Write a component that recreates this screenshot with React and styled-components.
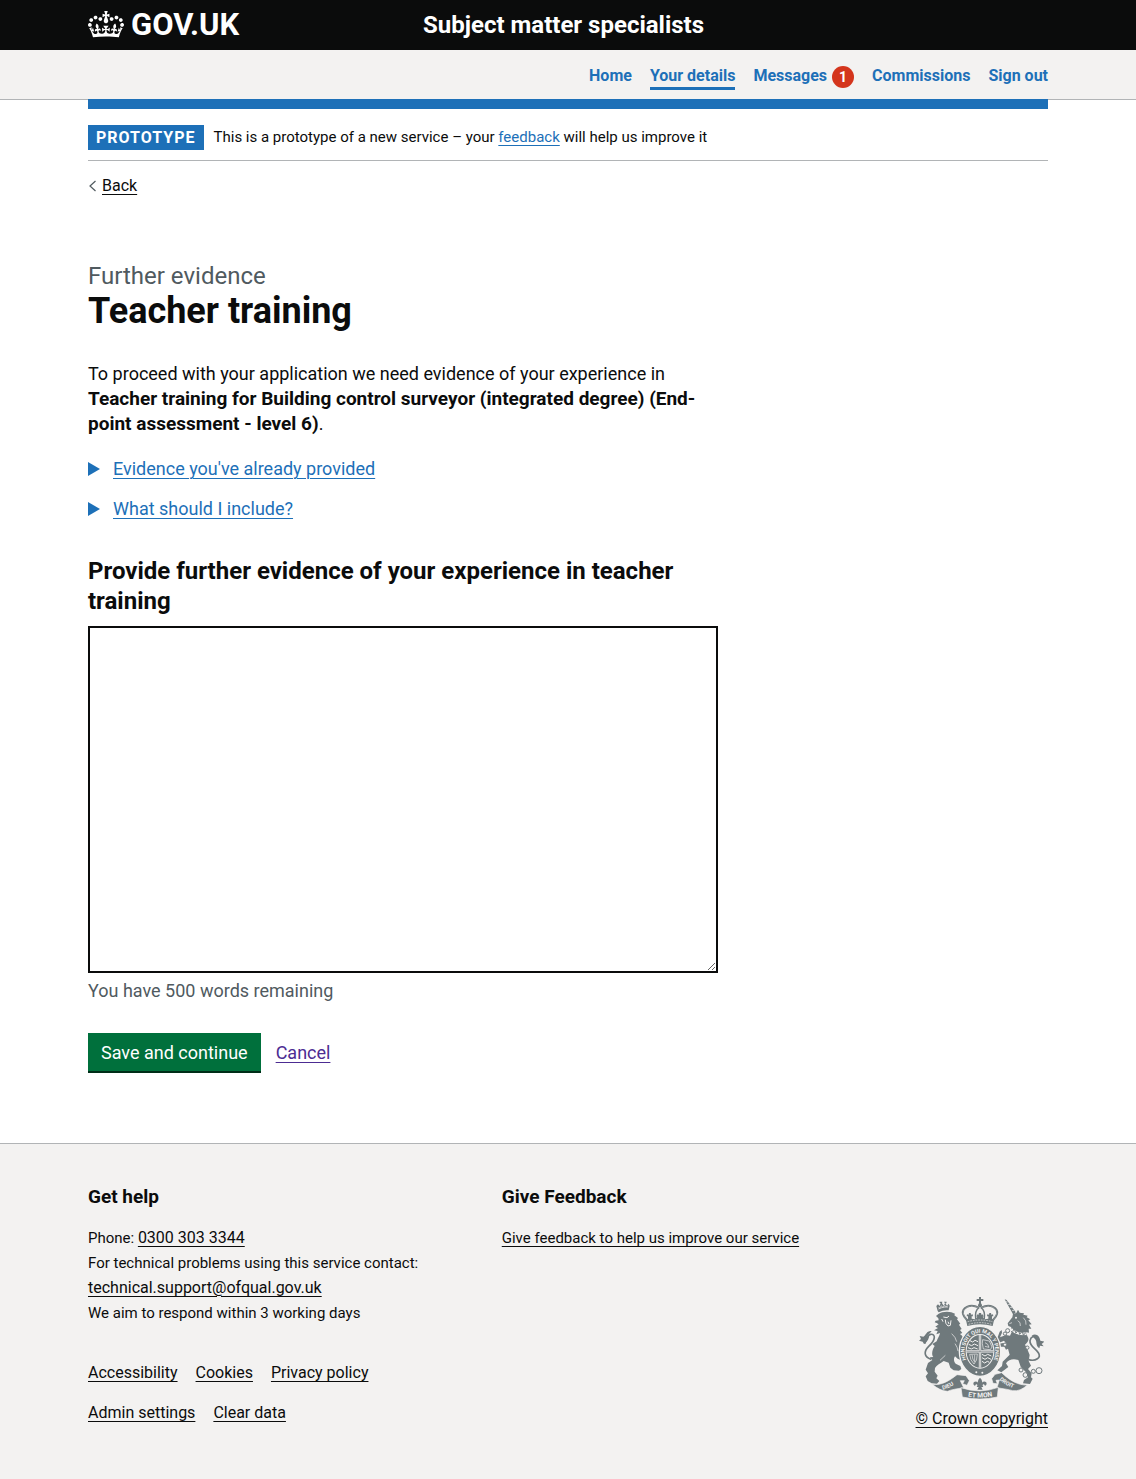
import React, { useState } from 'react';
import styled, { createGlobalStyle } from 'styled-components';

const colour = {
  ink: '#0b0c0c',
  muted: '#505a5f',
  link: '#1d70b8',
  visited: '#4c2c92',
  border: '#b1b4b6',
  panel: '#f3f2f1',
  crest: '#6f797c',
  red: '#d4351c',
  green: '#00703c',
};

const GlobalStyle = createGlobalStyle`
  *, *::before, *::after { box-sizing: border-box; }
  html { background: ${colour.panel}; }
  body {
    margin: 0;
    background: #ffffff;
    color: ${colour.ink};
    font-family: Roboto, "Liberation Sans", sans-serif;
    font-size: 18px;
    line-height: 25px;
  }
`;

const Container = styled.div`
  width: min(960px, 100% - 60px);
  margin: 0 auto;
`;

const Link = styled.a`
  color: ${({ $tone }) => colour[$tone || 'link']};
  text-decoration: underline;
  text-decoration-thickness: 1px;
  text-underline-offset: 3px;
`;

const FooterLink = styled(Link).attrs({ $tone: 'ink' })`
  font-size: 16px;
  line-height: 20px;
`;

const Header = styled.header`
  background: ${colour.ink};
  color: #ffffff;
`;

const HeaderRow = styled(Container)`
  display: flex;
  align-items: center;
  height: 50px;
`;

const LogoCell = styled.div`
  flex: 0 0 calc(100% / 3 + 15px);
`;

const LogoLink = styled.a`
  display: inline-flex;
  align-items: center;
  gap: 7px;
  color: #ffffff;
  font-size: 31px;
  font-weight: 700;
  line-height: 50px;
  text-decoration: none;
`;

const ServiceLink = styled.a`
  color: #ffffff;
  font-size: 24px;
  font-weight: 700;
  line-height: 50px;
  text-decoration: none;
`;

const NavBar = styled.nav`
  background: ${colour.panel};
  border-bottom: 1px solid ${colour.border};
`;

const NavList = styled.ul`
  display: flex;
  flex-wrap: wrap;
  justify-content: flex-end;
  gap: 0 18px;
  margin: 0;
  padding: 16px 0 9px;
  list-style: none;
`;

const NavLink = styled.a`
  display: flex;
  height: 24px;
  border-bottom: 3px solid ${({ $current }) => ($current ? colour.link : 'transparent')};
  color: ${colour.link};
  font-size: 16px;
  font-weight: 700;
  line-height: 20px;
  text-decoration: none;
`;

const Badge = styled.span`
  width: 22px;
  height: 22px;
  margin-left: 5px;
  border-radius: 50%;
  background: ${colour.red};
  color: #ffffff;
  font-size: 14px;
  line-height: 22px;
  text-align: center;
`;

const Page = styled(Container)`
  margin-top: -1px;
  border-top: 10px solid ${colour.link};
`;

const PhaseBanner = styled.div`
  display: flex;
  gap: 10px;
  padding: 16px 0 10px;
  border-bottom: 1px solid ${colour.border};
  font-size: 15px;
`;

const PhaseTag = styled.strong`
  padding: 0 8px;
  background: ${colour.link};
  color: #ffffff;
  font-size: 16px;
  letter-spacing: 1px;
  text-transform: uppercase;
`;

const BackLink = styled.a`
  display: inline-flex;
  align-items: center;
  gap: 5px;
  margin: 15px 0;
  color: ${colour.ink};
  font-size: 16px;
  line-height: 20px;
  text-decoration: underline;
  text-decoration-thickness: 1px;
  text-underline-offset: 3px;
`;

const BackRow = styled.div`
  display: flex;
`;

const Main = styled.main`
  max-width: 630px;
  padding: 50px 0 72px;
`;

const Title = styled.h1`
  margin: 0 0 30px;
  font-size: 36px;
  line-height: 40px;
`;

const Caption = styled.span`
  display: block;
  color: ${colour.muted};
  font-size: 24px;
  font-weight: 400;
  line-height: 30px;
`;

const Lead = styled.p`
  margin: 0 0 20px;

  strong { font-size: 19px; }
`;

const Details = styled.details`
  margin-bottom: 15px;
`;

const Summary = styled.summary`
  display: flex;
  align-items: center;
  gap: 13px;
  width: fit-content;
  color: ${colour.link};
  cursor: pointer;
  list-style: none;
  text-decoration: underline;
  text-decoration-thickness: 1px;
  text-underline-offset: 3px;

  &::-webkit-details-marker { display: none; }

  &::before {
    content: "";
    border: solid transparent;
    border-width: 7px 0 7px 12px;
    border-left-color: ${colour.link};
  }

  details[open] > &::before {
    border-width: 12px 7px 0 7px;
    border-color: ${colour.link} transparent transparent;
  }
`;

const Form = styled.form`
  margin-top: 35px;
`;

const FieldLabel = styled.label`
  display: block;
  margin-bottom: 10px;
  font-size: 24px;
  font-weight: 700;
  line-height: 30px;
`;

const TextArea = styled.textarea`
  display: block;
  width: 100%;
  height: 347px;
  padding: 5px;
  border: 2px solid ${colour.ink};
  border-radius: 0;
  background: #ffffff;
  color: ${colour.ink};
  font: inherit;
  resize: vertical;
`;

const Hint = styled.div`
  margin: 5px 0 30px;
  color: ${colour.muted};
`;

const Actions = styled.div`
  display: flex;
  align-items: center;
  gap: 15px;
`;

const Button = styled.button`
  height: 38px;
  padding: 0 13px;
  border: 0;
  background: ${colour.green};
  box-shadow: 0 2px 0 #002d18;
  color: #ffffff;
  font: inherit;
  cursor: pointer;
`;

const Footer = styled.footer`
  padding: 40px 0 48px;
  border-top: 1px solid ${colour.border};
  background: ${colour.panel};
  font-size: 15px;
`;

const FooterRow = styled(Container)`
  display: flex;
  flex-wrap: wrap;
  align-items: flex-end;
`;

const FooterMain = styled.div`
  flex: 1;
`;

const FooterColumns = styled.div`
  display: grid;
  grid-template-columns: 1fr 1fr;
`;

const FooterHeading = styled.h2`
  margin: 0 0 17px;
  font-size: 19px;
  line-height: 25px;
`;

const FooterText = styled.p`
  margin: 0;
`;

const FooterLinks = styled.div`
  display: grid;
  gap: 15px;
  padding: 35px 0 5px;
`;

const LinkList = styled.ul`
  display: flex;
  flex-wrap: wrap;
  gap: 0 18px;
  margin: 0;
  padding: 0;
  list-style: none;
`;

const Copyright = styled.a`
  display: grid;
  justify-items: center;
  gap: 7px;
  color: ${colour.ink};
  font-size: 16px;
  text-decoration: underline;
  text-decoration-thickness: 1px;
  text-underline-offset: 3px;
`;

const crownPath =
  'M25 30.2c3.5 1.5 7.7-.2 9.1-3.7 1.5-3.6-.2-7.8-3.9-9.2-3.6-1.4-7.6.3-9.1 3.9-1.4 3.5.3 7.5 3.9 9zM9 39.5c3.6 1.5 7.8-.2 9.2-3.7 1.5-3.6-.2-7.8-3.9-9.1-3.6-1.5-7.6.2-9.1 3.8-1.4 3.5.3 7.5 3.8 9zM4.4 57.2c3.5 1.5 7.7-.2 9.1-3.8 1.5-3.6-.2-7.7-3.9-9.1-3.5-1.5-7.6.3-9.1 3.8-1.4 3.5.3 7.6 3.9 9.1zm38.3-21.4c3.5 1.5 7.7-.2 9.1-3.8 1.5-3.6-.2-7.7-3.9-9.1-3.6-1.5-7.6.3-9.1 3.8-1.3 3.6.4 7.7 3.9 9.1zm64.4-5.6c-3.6 1.5-7.8-.2-9.1-3.7-1.5-3.6.2-7.8 3.8-9.2 3.6-1.4 7.7.3 9.2 3.9 1.3 3.5-.4 7.5-3.9 9zm15.9 9.3c-3.6 1.5-7.7-.2-9.1-3.7-1.5-3.6.2-7.8 3.7-9.1 3.6-1.5 7.7.2 9.2 3.8 1.5 3.5-.3 7.5-3.8 9zm4.7 17.7c-3.6 1.5-7.8-.2-9.2-3.8-1.5-3.6.2-7.7 3.9-9.1 3.6-1.5 7.7.3 9.2 3.8 1.3 3.5-.4 7.6-3.9 9.1zM89.3 35.8c-3.6 1.5-7.8-.2-9.2-3.8-1.4-3.6.2-7.7 3.9-9.1 3.6-1.5 7.7.3 9.2 3.8 1.4 3.6-.3 7.7-3.9 9.1zM69.7 17.7l8.9 4.7V9.3l-8.9 2.8c-.2-.3-.5-.6-.9-.9L72.4 0H59.6l3.5 11.2c-.3.3-.6.5-.9.9l-8.8-2.8v13.1l8.8-4.7c.3.3.6.7.9.9l-5 15.4v.1c-.2.8-.4 1.6-.4 2.4 0 4.1 3.1 7.5 7 8.1h.2c.3 0 .7.1 1 .1.4 0 .7 0 1-.1h.2c4-.6 7.1-4.1 7.1-8.1 0-.8-.1-1.7-.4-2.4V34l-5.1-15.4c.4-.2.7-.6 1-.9zM66 92.8c16.9 0 32.8 1.1 47.1 3.2 4-16.9 8.9-26.7 14-33.5l-9.6-3.4c1 4.9 1.1 7.2 0 10.2-1.5-1.4-3-4.3-4.2-8.7L108.6 76c2.8-2 5-3.2 7.5-3.3-4.4 9.4-10 11.9-13.6 11.2-4.3-.8-6.3-4.6-5.6-7.9 1-4.7 5.7-5.9 8-.5 4.3-8.7-3-11.4-7.6-8.8 7.1-7.2 7.9-13.5 2.1-21.1-8 6.1-8.1 12.3-4.5 20.8-4.7-5.4-12.1-2.5-9.5 6.2 3.4-5.2 7.9-2 7.2 3.1-.6 4.3-6.4 7.8-13.5 7.2-10.3-.9-10.9-8-11.2-13.8 2.5-.5 7.1 1.8 11 7.3L80.2 60c-4.1 4.4-8 5.3-12.3 5.4 1.4-4.4 8-11.6 8-11.6H55.5s6.4 7.2 7.9 11.6c-4.2-.1-8-1-12.3-5.4l1.4 16.4c3.9-5.5 8.5-7.7 10.9-7.3-.3 5.8-.9 12.8-11.1 13.8-7.2.6-12.9-2.9-13.5-7.2-.7-5 3.8-8.3 7.1-3.1 2.7-8.7-4.6-11.6-9.4-6.2 3.7-8.5 3.6-14.7-4.6-20.8-5.8 7.6-5 13.9 2.2 21.1-4.7-2.6-11.9.1-7.7 8.8 2.3-5.5 7.1-4.2 8.1.5.7 3.3-1.3 7.1-5.7 7.9-3.5.7-9-1.8-13.5-11.2 2.5.1 4.7 1.3 7.5 3.3l-4.7-15.4c-1.2 4.4-2.7 7.2-4.3 8.7-1.1-3-.9-5.3 0-10.2l-9.5 3.4c5 6.9 9.9 16.7 14 33.5 14.8-2.1 30.8-3.2 47.7-3.2z';

function Crown() {
  return (
    <svg width="36" height="28" viewBox="0 0 132 102" fill="currentColor" aria-hidden="true">
      <path d={crownPath} />
    </svg>
  );
}

function BackArrow() {
  return (
    <svg width="9" height="12" viewBox="0 0 9 12" fill="none" stroke={colour.muted} strokeWidth="1.2" aria-hidden="true">
      <path d="M7.5 1 2 6l5.5 5" />
    </svg>
  );
}

function RoyalArms() {
  const motto = {
    fill: colour.panel,
    fontFamily: 'Roboto, sans-serif',
    fontWeight: 700,
    fontSize: 17,
  };
  return (
    <svg width="125" height="102" viewBox="60 50 375 306" fill={colour.crest} aria-hidden="true">
      <defs>
        <path id="garter" d="M210 252A46 56 0 1 1 276 252" />
        <path id="scroll-left" d="M131 328C148 325 164 315 180 302" />
        <path id="scroll-right" d="M301 298C316 312 334 323 360 328" />
        <path id="scroll-base" d="M198 347Q243 357 290 346" />
      </defs>

      {/* crowned lion */}
      <path d="M116 92l-4-15 5-5 5 5 3-9h-3v-4h8l-1 5 5 7 4-7-3-5h8l-1 5h-3l5 7 5-6 3 6-3 14q-15-2-30 6z" />
      <path d="M118 86q14-8 29-6M119 80l3 4 5-8 5 6 5-7 5 5 4-4" fill="none" stroke={colour.panel} strokeWidth="2" />
      <path d="M118 101C128 94 146 92 157 96L168 100 166 105 177 113 174 117 184 130 180 133 188 146 183 149 190 158 183 161C191 167 196 174 195 184L187 186C192 192 195 199 191 207L184 209 187 216 180 222 189 228 183 238 176 235 168 228C163 235 164 244 170 250L184 257 187 266 180 271 164 270 154 262 149 247 134 242C124 249 113 254 108 263L107 274 116 286 112 294 121 302 114 310 98 309 86 302 80 288 87 279 80 268 87 248 100 239 92 231 103 230C96 222 101 206 107 197L100 191 113 183C116 173 122 167 123 158L112 162 116 152 105 150 117 143 109 139 119 132 113 128 107 126 110 121 119 120 118 114 111 107z" />
      <path d="M133 110l11 2 6-5M139 118q-1 12 8 19l7-2 2-15M147 124l3 7M128 116l4 8" fill="none" stroke={colour.panel} strokeWidth="3" />
      <path d="M158 160q12 10 15 24M168 190q8 11 9 22M139 225l-16 15" fill="none" stroke={colour.panel} strokeWidth="2" />
      <path d="M97 237C74 230 74 213 89 198 111 178 110 160 95 162 85 164 82 177 77 190" fill="none" stroke={colour.crest} strokeWidth="5" />
      <path d="M98 152C82 150 83 163 73 169L62 167 66 176 60 181 71 184 75 191C82 187 90 178 90 167L83 170z" />

      {/* chained unicorn */}
      <path d="M317 57l6 2 27 37-7 7z" />
      <path d="M321 64l5 1M327 72l6 1M333 81l6 1M339 90l6 1" stroke={colour.panel} strokeWidth="2" />
      <path d="M342 101L352 98 357 88 362 97 375 99 373 103 386 106 383 111 394 117 388 120 398 132 390 133 397 145 389 145 390 157 380 155 386 169C391 177 388 185 378 193L385 207 392 224 389 242 396 256 387 266 398 279 396 291 401 295 393 311 372 309 375 299 387 291 381 276 365 259 358 239C343 234 329 237 321 249L328 260 307 276 295 270 309 257 311 244 332 223 327 205 321 208 316 199 302 199 300 190 313 188 323 192 315 181 301 187 290 179 297 168 302 154 308 149 309 157 303 171 321 164 333 166 340 151 336 140 328 137 326 129 340 111z" />
      <circle cx="351" cy="112" r="3" fill={colour.panel} />
      <path d="M331 130l8-3M356 121q10 4 8 16M373 112q10 9 8 21" fill="none" stroke={colour.panel} strokeWidth="2" />
      <path d="M337 148Q356 164 382 160" fill="none" stroke={colour.panel} strokeWidth="9" />
      <path d="M336 153Q356 169 382 166M341 154l4-9 6 13 7-10 4 14 8-10 3 13 8-9" fill="none" stroke={colour.crest} strokeWidth="3" />
      <g fill={colour.panel} stroke={colour.crest} strokeWidth="3">
        <circle cx="326" cy="151" r="6" />
        <circle cx="318" cy="160" r="5" />
        <circle cx="318" cy="193" r="5" />
        <circle cx="385" cy="202" r="5" />
        <circle cx="366" cy="269" r="6" />
        <circle cx="379" cy="284" r="7" />
        <circle cx="403" cy="273" r="6" />
        <circle cx="420" cy="271" r="9" />
      </g>
      <path d="M389 238C410 244 428 232 418 217 409 204 391 197 393 181 395 168 409 163 414 172" fill="none" stroke={colour.crest} strokeWidth="5" />
      <path d="M398 166C412 157 422 168 424 181L436 184 428 191 434 198 423 196 421 204C409 197 415 183 408 176z" />

      {/* crown above the shield */}
      <path d="M240 50h6v6h7v6h-7v9h-6v-9h-7v-6h7z" />
      <circle cx="243" cy="75" r="6" />
      <g fill="none" stroke={colour.crest} strokeWidth="6">
        <path d="M239 82C212 68 188 84 192 101 195 111 201 114 205 121" />
        <path d="M247 82C274 68 298 84 294 101 291 111 285 114 281 121" />
        <path d="M241 81C230 88 228 102 230 116M245 81C256 88 258 102 256 116" strokeWidth="4" />
      </g>
      <g fill="none" stroke={colour.panel} strokeWidth="2" strokeDasharray="1 3">
        <path d="M237 82C212 70 190 84 193 101 196 111 200 114 204 120" />
        <path d="M249 82C274 70 296 84 293 101 290 111 286 114 282 120" />
      </g>
      <path d="M201 119l6-3v-8h-4l1-6 5 1 1-5h5l1 5 5-1 1 6h-4v7l11 2 6-8h-3l2-7 4 2 2-6h6l2 6 4-2 2 7h-3l6 8 11-2v-7h-4l1-6 5 1 1-5h5l1 5 5-1 1 6h-4v8l6 3-4 18Q243 127 205 137z" />
      <path d="M206 124Q243 114 280 124M209 132Q243 122 277 132" fill="none" stroke={colour.panel} strokeWidth="2" strokeDasharray="5 3" />

      {/* garter and quartered shield */}
      <ellipse cx="243" cy="213" rx="62" ry="75" stroke={colour.panel} strokeWidth="4" />
      <ellipse cx="243" cy="213" rx="43" ry="52" fill={colour.panel} />
      <ellipse cx="243" cy="213" rx="40" ry="49" />
      <path d="M243 164v98M203 213h80" stroke={colour.panel} strokeWidth="7" />
      <path d="M243 164v98M203 213h80" stroke={colour.crest} strokeWidth="2" />
      <g fill="none" stroke={colour.panel} strokeWidth="3">
        <path d="M213 181l8 4 7-5 9 4M209 192l9 4 8-5 11 5M207 202l10 4 8-4 11 4" />
        <path d="M249 222l9 5 8-5 11 5M249 232l9 5 8-5 10 5M249 243l8 5 8-5 6 3" />
        <path d="M251 178l20 4 8 18-5 8-21-2-3-17zM258 187l8 5 4 9-12-3" strokeWidth="2" />
        <path d="M212 222q1 18 13 29 10-9 10-30zM219 223q1 15 8 22M227 223v20" strokeWidth="2" />
      </g>
      <text {...motto} fontSize="16">
        <textPath href="#garter" startOffset="50%" textAnchor="middle">HONI SOIT QUI MAL Y PENSE</textPath>
      </text>
      <circle cx="232" cy="276" r="3" fill={colour.panel} />
      <circle cx="250" cy="277" r="3" fill={colour.panel} />

      {/* motto scroll and fleur-de-lis */}
      <g stroke={colour.panel} strokeWidth="2">
        <path d="M100 312C128 316 151 301 174 283L201 286 211 301 204 315 191 310 196 301 184 301 194 322C174 326 157 327 146 333Q123 332 100 312z" />
        <path d="M385 314C357 315 333 301 308 277L288 282 278 295 282 309 295 310 291 300 301 299 294 322C315 326 329 327 341 331Q364 334 385 314z" />
        <path d="M186 322Q243 342 298 321L295 350Q243 362 190 350z" />
      </g>
      <text {...motto}>
        <textPath href="#scroll-left">DIEU</textPath>
      </text>
      <text {...motto}>
        <textPath href="#scroll-right">DROIT</textPath>
      </text>
      <text {...motto} fontSize="20">
        <textPath href="#scroll-base" startOffset="46" textAnchor="middle">ET MON</textPath>
      </text>
      <path d="M243 292q11 11 4 22 3-14 14-9 5 7-3 12-1-6-6-5-3 3 1 8h-6l4 8h-16l4-8h-6q4-5 1-8-5-1-6 5-8-5-3-12 11-5 14 9-7-11 4-22z" />
    </svg>
  );
}

const navItems = [
  { label: 'Home' },
  { label: 'Your details', current: true },
  { label: 'Messages', count: 1 },
  { label: 'Commissions' },
  { label: 'Sign out' },
];

const footerLinkRows = [
  ['Accessibility', 'Cookies', 'Privacy policy'],
  ['Admin settings', 'Clear data'],
];

export default function App() {
  const [evidence, setEvidence] = useState('');
  const used = evidence.trim() ? evidence.trim().split(/\s+/).length : 0;

  return (
    <>
      <GlobalStyle />
      <Header>
        <HeaderRow>
          <LogoCell>
            <LogoLink href="#">
              <Crown />
              <span>GOV.UK</span>
            </LogoLink>
          </LogoCell>
          <ServiceLink href="#">Subject matter specialists</ServiceLink>
        </HeaderRow>
      </Header>

      <NavBar aria-label="Main">
        <Container>
          <NavList>
            {navItems.map(({ label, current, count }) => (
              <li key={label}>
                <NavLink href="#" $current={current} aria-current={current ? 'page' : undefined}>
                  {label}
                  {count && <Badge>{count}</Badge>}
                </NavLink>
              </li>
            ))}
          </NavList>
        </Container>
      </NavBar>

      <Page>
        <PhaseBanner>
          <PhaseTag>Prototype</PhaseTag>
          <span>
            This is a prototype of a new service – your <Link href="#">feedback</Link> will help us improve it
          </span>
        </PhaseBanner>
        <BackRow>
          <BackLink href="#">
            <BackArrow />
            <span>Back</span>
          </BackLink>
        </BackRow>

        <Main>
          <Title>
            <Caption>Further evidence</Caption>
            Teacher training
          </Title>
          <Lead>
            To proceed with your application we need evidence of your experience in{' '}
            <strong>
              Teacher training for Building control surveyor (integrated degree) (End-point assessment - level 6)
            </strong>
            .
          </Lead>
          <Details>
            <Summary>Evidence you've already provided</Summary>
          </Details>
          <Details>
            <Summary>What should I include?</Summary>
          </Details>

          <Form onSubmit={(event) => event.preventDefault()}>
            <FieldLabel htmlFor="evidence">
              Provide further evidence of your experience in teacher training
            </FieldLabel>
            <TextArea
              id="evidence"
              value={evidence}
              onChange={(event) => setEvidence(event.target.value)}
              aria-describedby="evidence-count"
            />
            <Hint id="evidence-count">You have {500 - used} words remaining</Hint>
            <Actions>
              <Button type="submit">Save and continue</Button>
              <Link href="#" $tone="visited">Cancel</Link>
            </Actions>
          </Form>
        </Main>
      </Page>

      <Footer>
        <FooterRow>
          <FooterMain>
            <FooterColumns>
              <section>
                <FooterHeading>Get help</FooterHeading>
                <FooterText>
                  Phone: <FooterLink href="tel:03003033344">0300 303 3344</FooterLink>
                </FooterText>
                <FooterText>For technical problems using this service contact:</FooterText>
                <FooterText>
                  <FooterLink href="mailto:technical.support@ofqual.gov.uk">technical.support@ofqual.gov.uk</FooterLink>
                </FooterText>
                <FooterText>We aim to respond within 3 working days</FooterText>
              </section>
              <section>
                <FooterHeading>Give Feedback</FooterHeading>
                <FooterText>
                  <Link href="#" $tone="ink">Give feedback to help us improve our service</Link>
                </FooterText>
              </section>
            </FooterColumns>
            <FooterLinks>
              {footerLinkRows.map((row) => (
                <LinkList key={row[0]}>
                  {row.map((label) => (
                    <li key={label}>
                      <FooterLink href="#">{label}</FooterLink>
                    </li>
                  ))}
                </LinkList>
              ))}
            </FooterLinks>
          </FooterMain>
          <Copyright href="#">
            <RoyalArms />
            <span>© Crown copyright</span>
          </Copyright>
        </FooterRow>
      </Footer>
    </>
  );
}
